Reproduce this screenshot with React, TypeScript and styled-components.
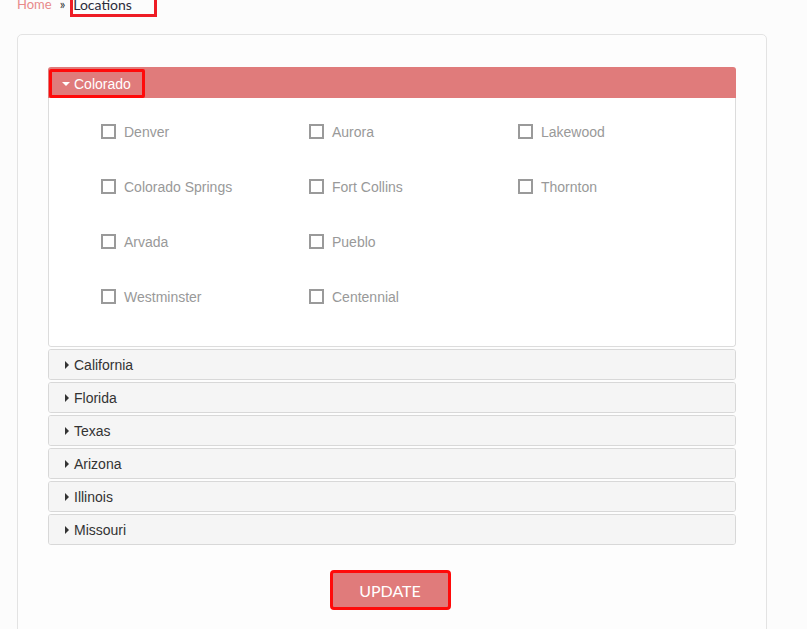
import React from "react";
import styled, { createGlobalStyle } from "styled-components";

const Global = createGlobalStyle`
  html, body { margin: 0; padding: 0; background: #fcfcfc; }
  body { font-family: "Liberation Sans", Arial, sans-serif; overflow: hidden; }
`;

const Page = styled.div`
  padding: 0 40px 0 17px;
  width: 750px;
`;

const Crumbs = styled.div`
  display: flex;
  align-items: flex-end;
  margin-top: -12px;
  height: 29px;
  font-family: Lato, sans-serif;
  font-size: 13px;
  margin-bottom: 17px;
`;

const CrumbLink = styled.a`
  color: #e88a8a;
  text-decoration: none;
  padding-bottom: 5px;
  line-height: 16px;
`;

const Sep = styled.span`
  color: #333;
  margin: 0 5px 0 8px;
  padding-bottom: 5px;
  line-height: 16px;
`;

const Current = styled.span`
  color: #2b2b3b;
  font-size: 14px;
  border: 3px solid #ee1c25;
  border-top-width: 0;
  padding: 12px 22px 1px 0;
  line-height: 16px;
  display: inline-block;
`;

const Card = styled.div`
  border: 1px solid #e3e3e3;
  border-radius: 5px;
  background: #fdfdfd;
  padding: 32px 30px 40px;
  height: 600px;
`;

const Accordion = styled.div`
  display: flex;
  flex-direction: column;
  gap: 2px;
`;

const Panel = styled.div<{ $open?: boolean }>`
  border: ${(p) => (p.$open ? "none" : "1px solid #d8d8d8")};
  border-radius: 3px;
  background: ${(p) => (p.$open ? "transparent" : "#f5f5f5")};
  overflow: hidden;
`;

const Header = styled.div<{ $open?: boolean }>`
  height: ${(p) => (p.$open ? "31px" : "29px")};
  display: flex;
  align-items: flex-start;
  background: ${(p) => (p.$open ? "#e07b7b" : "#f5f5f5")};
  color: ${(p) => (p.$open ? "#ffffff" : "#333333")};
  font-family: "Liberation Sans", Arial, sans-serif;
  font-size: 14px;
`;

const HeaderLink = styled.span<{ $open?: boolean }>`
  display: flex;
  align-items: center;
  box-sizing: border-box;
  padding: 0 ${(p) => (p.$open ? "11px" : "0")} 0 ${(p) => (p.$open ? "9px" : "16px")};
  border: ${(p) => (p.$open ? "3px solid #ff0a0a" : "none")};
  border-radius: 2px;
  margin: ${(p) => (p.$open ? "2px 0 0 1px" : "0")};
  height: 29px;
`;

const Caret = styled.span<{ $open?: boolean }>`
  width: 0;
  height: 0;
  ${(p) =>
    p.$open
      ? `border-left: 4px solid transparent; border-right: 4px solid transparent; border-top: 4px solid #fff; margin: 0 4px 0 1px;`
      : `border-top: 4px solid transparent; border-bottom: 4px solid transparent; border-left: 4px solid #333; margin: 0 5px 0 0;`}
`;

const Body = styled.div`
  border: 1px solid #dcdcdc;
  border-top: none;
  border-radius: 0 0 3px 3px;
  background: #fff;
  padding: 6px 0 22px 52px;
  display: grid;
  grid-template-columns: 208px 209px 208px;
  grid-auto-rows: 55px;
`;

const Item = styled.label`
  display: flex;
  align-items: center;
  color: #999;
  font-family: "Liberation Sans", Arial, sans-serif;
  font-size: 14px;
`;

const Box = styled.span`
  width: 11px;
  height: 11px;
  border: 2px solid #9a9a9a;
  margin-right: 8px;
  background: #fff;
`;

const Footer = styled.div`
  display: flex;
  justify-content: center;
  padding: 25px 4px 0 0;
`;

const Button = styled.button`
  width: 121px;
  height: 40px;
  background: #e07b7b;
  border: 3px solid #ff0a0a;
  border-radius: 4px;
  color: #fff;
  font-family: Lato, sans-serif;
  font-size: 16px;
  padding: 0;
`;

const colorado = [
  "Denver",
  "Aurora",
  "Lakewood",
  "Colorado Springs",
  "Fort Collins",
  "Thornton",
  "Arvada",
  "Pueblo",
  null,
  "Westminster",
  "Centennial",
];

const states = ["California", "Florida", "Texas", "Arizona", "Illinois", "Missouri"];

export default function App() {
  return (
    <>
      <Global />
      <Page>
        <Crumbs>
          <CrumbLink href="#">Home</CrumbLink>
          <Sep>»</Sep>
          <Current>Locations</Current>
        </Crumbs>
        <Card>
          <Accordion>
            <Panel $open>
              <Header $open>
                <HeaderLink $open>
                  <Caret $open />
                  Colorado
                </HeaderLink>
              </Header>
              <Body>
                {colorado.map((c, i) =>
                  c ? (
                    <Item key={i}>
                      <Box />
                      {c}
                    </Item>
                  ) : (
                    <span key={i} />
                  )
                )}
              </Body>
            </Panel>
            {states.map((s) => (
              <Panel key={s}>
                <Header>
                  <HeaderLink>
                    <Caret />
                    {s}
                  </HeaderLink>
                </Header>
              </Panel>
            ))}
          </Accordion>
          <Footer>
            <Button>UPDATE</Button>
          </Footer>
        </Card>
      </Page>
    </>
  );
}
